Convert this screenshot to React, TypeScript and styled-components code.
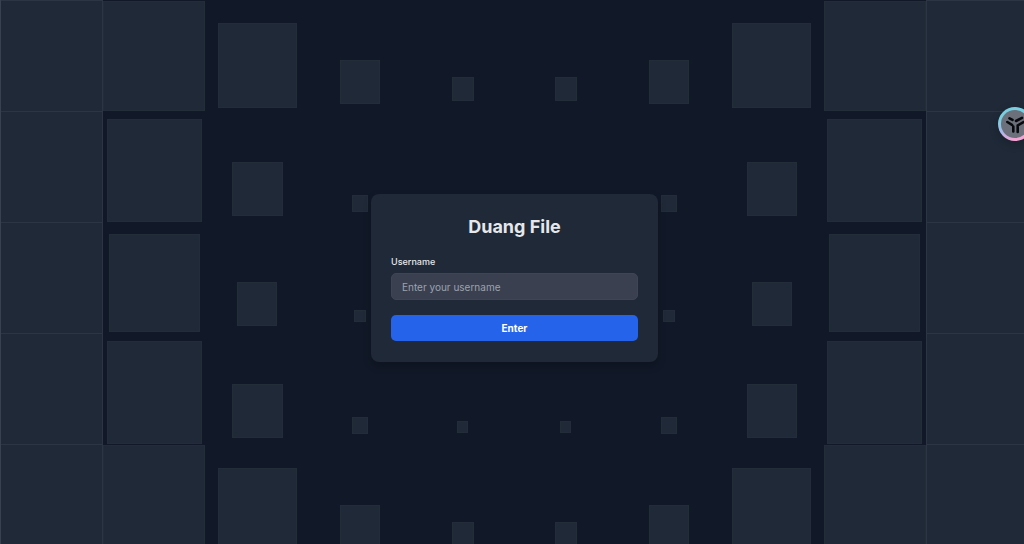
import React from "react";
import styled, { createGlobalStyle } from "styled-components";

const GlobalStyle = createGlobalStyle`
  *, *::before, *::after { box-sizing: border-box; }
  body {
    margin: 0;
    background: #111827;
    color: #e5e7eb;
    font-family: Inter, "Liberation Sans", sans-serif;
  }
`;

const Page = styled.main`
  position: relative;
  display: flex;
  align-items: center;
  justify-content: center;
  min-height: 100vh;
  padding: 24px 16px 12px 21px;
  overflow: hidden;
`;

const Backdrop = styled.svg`
  position: absolute;
  inset: 0;
  width: 100%;
  height: 100%;
`;

const Card = styled.form`
  position: relative;
  width: 100%;
  max-width: 287px;
  padding: 21px 20px;
  border-radius: 8px;
  background: #1f2937;
  box-shadow: 0 4px 8px rgba(0, 0, 0, 0.2);
`;

const Title = styled.h1`
  margin: 0 0 16px;
  font-size: 18px;
  font-weight: 700;
  line-height: 24px;
  text-align: center;
`;

const Label = styled.label`
  display: block;
  margin-bottom: 4px;
  font-size: 9px;
  font-weight: 500;
  line-height: 14px;
`;

const Field = styled.input`
  display: block;
  width: 100%;
  height: 27px;
  margin-bottom: 15px;
  padding: 0 10px;
  border: 1px solid #3f4554;
  border-radius: 5px;
  background: #3a4050;
  color: #e5e7eb;
  font: inherit;
  font-size: 10px;

  &::placeholder {
    color: #9ca3af;
    opacity: 1;
  }
`;

const SubmitButton = styled.button`
  display: block;
  width: 100%;
  height: 26px;
  padding: 0;
  border: 0;
  border-radius: 5px;
  background: #2563eb;
  color: #fff;
  font: inherit;
  font-size: 10px;
  font-weight: 700;
  cursor: pointer;
`;

const FloatingButton = styled.button`
  position: absolute;
  top: 107px;
  right: -8px;
  width: 34px;
  height: 34px;
  padding: 3px;
  border: 0;
  border-radius: 50%;
  background: linear-gradient(165deg, #79cfe0 30%, #a9b8ea 60%, #f5a3d3 85%);
  box-shadow: 0 3px 10px rgba(0, 0, 0, 0.2);
  cursor: pointer;
`;

const Mark = styled.svg`
  display: block;
  width: 28px;
  height: 28px;
  border-radius: 50%;
  background: #6b707a;
`;

/* x, y, width, height of each tile in the wave pattern */
type Tile = [number, number, number, number];

const edgeRows = [0, 111, 222, 333, 444];

const edgeTiles: Tile[] = edgeRows.flatMap((y): Tile[] => [
  [0, y, 103, 111],
  [926, y, 103, 111],
]);

const tiles: Tile[] = [
  [103, 1, 102, 110],
  [107, 119, 95, 103],
  [109, 234, 91, 98],
  [107, 341, 95, 103],
  [103, 445, 102, 110],
  [824, 1, 102, 110],
  [827, 119, 95, 103],
  [829, 234, 91, 98],
  [827, 341, 95, 103],
  [824, 445, 102, 110],
  [218, 23, 79, 85],
  [232, 162, 51, 54],
  [237, 282, 40, 44],
  [232, 384, 51, 54],
  [218, 468, 79, 85],
  [732, 23, 79, 85],
  [747, 162, 50, 54],
  [752, 282, 40, 44],
  [747, 384, 50, 54],
  [732, 468, 79, 85],
  [340, 60, 40, 44],
  [352, 195, 16, 17],
  [354, 310, 12, 12],
  [352, 417, 16, 17],
  [340, 505, 40, 44],
  [649, 60, 40, 44],
  [661, 195, 16, 17],
  [663, 310, 12, 12],
  [661, 417, 16, 17],
  [649, 505, 40, 44],
  [452, 77, 22, 24],
  [457, 421, 11, 12],
  [452, 522, 22, 24],
  [555, 77, 22, 24],
  [560, 421, 11, 12],
  [555, 522, 22, 24],
];

export default function App() {
  return (
    <>
      <GlobalStyle />
      <Page>
        <Backdrop viewBox="0 0 1024 544" preserveAspectRatio="xMidYMid slice" aria-hidden="true">
          <g fill="#1f2937">
            {edgeTiles.map(([x, y, width, height]) => (
              <rect key={`${x}-${y}`} x={x} y={y} width={width} height={height} />
            ))}
          </g>
          <g fill="#1f2937" stroke="#232d3a">
            {tiles.map(([x, y, width, height]) => (
              <rect key={`${x}-${y}`} x={x + 0.5} y={y + 0.5} width={width - 1} height={height - 1} />
            ))}
          </g>
          <path
            d="M0 .5H103M926 .5H1024M102.500 0V544M926.500 0V544M0 111.500H103M926 111.500H1024M0 222.500H103M926 222.500H1024M0 333.500H103M926 333.500H1024M0 444.500H103M926 444.500H1024"
            stroke="#2b3543"
          />
          <path d="M.5 0V544" stroke="#374151" />
        </Backdrop>
        <Card onSubmit={(event) => event.preventDefault()}>
          <Title>Duang File</Title>
          <Label htmlFor="username">Username</Label>
          <Field id="username" type="text" placeholder="Enter your username" />
          <SubmitButton type="submit">Enter</SubmitButton>
        </Card>
        <FloatingButton type="button" aria-label="Open assistant">
          <Mark viewBox="0 0 28 28" fill="none" stroke="#07090c" strokeWidth="2.600" strokeLinecap="round" aria-hidden="true">
            <path d="M8.500 8.300L11.500 9.800M15 11L21 7.800M6.300 12L11 14.800M12.300 16.500V21.500M22.500 12L16.700 15.500V22" />
          </Mark>
        </FloatingButton>
      </Page>
    </>
  );
}
